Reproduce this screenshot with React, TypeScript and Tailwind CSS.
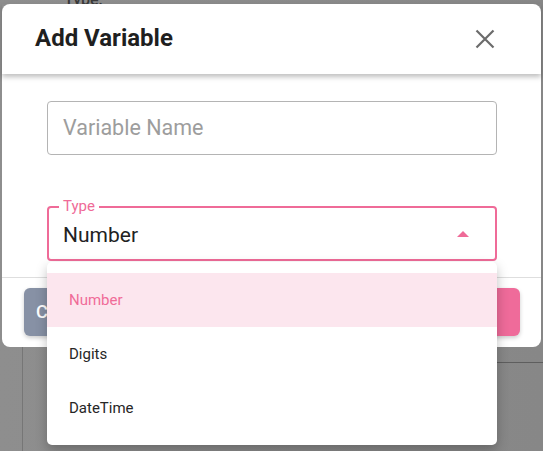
const options = ['Number', 'Digits', 'DateTime'];

const App = () => {
  const selected = 'Number';

  return (
    <div
      className="relative w-[543px] h-[451px] overflow-hidden bg-gradient-to-r from-[#8e8e8e] to-[#878787]"
      style={{ fontFamily: 'Roboto, "Noto Sans", sans-serif' }}
    >
      {/* page behind the overlay */}
      <div className="absolute left-[64px] top-[-12px] text-[16px] font-medium text-[#3a3a3a]">Type:</div>
      <div className="absolute left-[22px] top-[340px] bottom-0 w-px bg-[#767676]" />
      <div className="absolute left-[490px] right-0 top-[362px] h-px bg-[#5e5e5e]" />

      {/* dialog */}
      <div className="absolute left-[2px] top-[4px] w-[539px] h-[343px] bg-white rounded-[8px] flex flex-col">
        <div className="h-[70px] flex items-center justify-between pl-[33px] pr-[46px] shadow-[0_3px_5px_rgba(0,0,0,0.25)] relative z-10">
          <h2 className="text-[24px] font-bold text-[#1f1f1f] -mt-[3px]">Add Variable</h2>
          <svg width="20" height="20" viewBox="0 0 20 20" className="-mt-[1px]">
            <path d="M1.5 1.5 L18.5 18.5 M18.5 1.5 L1.5 18.5" stroke="#6b6b6b" strokeWidth="2.2" />
          </svg>
        </div>

        <div className="pl-[45px] pr-[44px] pt-[27px] flex flex-col gap-[51px]">
          <div className="h-[54px] rounded-[4px] border border-[#b4b4b4] flex items-center px-[15px]">
            <span className="text-[21.5px] text-[#9d9d9d]">Variable Name</span>
          </div>
          <div className="relative h-[55px] rounded-[4px] border-2 border-[#ef6b98] flex items-center justify-between pl-[14px] pr-[25px]">
            <span className="absolute left-[10px] -top-[10px] bg-white px-[4px] text-[15px] leading-[16px] text-[#ef6b98]">Type</span>
            <span className="text-[21px] text-[#222] mt-[4px]">Number</span>
            <svg width="14" height="8" viewBox="0 0 14 8">
              <path d="M1 7 L7 1 L13 7 Z" fill="#ef6b98" />
            </svg>
          </div>
        </div>

        <div className="mt-auto border-t border-[#dedede] h-[70px] flex items-center justify-between pl-[22px] pr-[21px] pb-[2px]">
          <button className="h-[48px] w-[110px] rounded-[6px] bg-[#8791a5] text-white text-[18px] font-medium shadow-[0_2px_4px_rgba(0,0,0,0.2)] text-left pl-[12px]">
            Cancel
          </button>
          <button className="h-[48px] w-[130px] rounded-[6px] bg-[#ef6b9a] text-white text-[18px] font-medium shadow-[0_2px_4px_rgba(0,0,0,0.2)]">
            Save
          </button>
        </div>
      </div>

      {/* dropdown menu */}
      <ul className="absolute left-[47px] top-[262px] w-[450px] h-[183px] bg-white rounded-[5px] shadow-[0_5px_12px_rgba(0,0,0,0.25)] pt-[11px] z-20">
        {options.map((opt) => (
          <li
            key={opt}
            className={`h-[54px] flex items-center pl-[22px] text-[15px] ${
              opt === selected ? 'bg-[#fce6ee] text-[#f06b98]' : 'text-[#262626]'
            }`}
          >
            {opt}
          </li>
        ))}
      </ul>
    </div>
  );
};

export default App;
